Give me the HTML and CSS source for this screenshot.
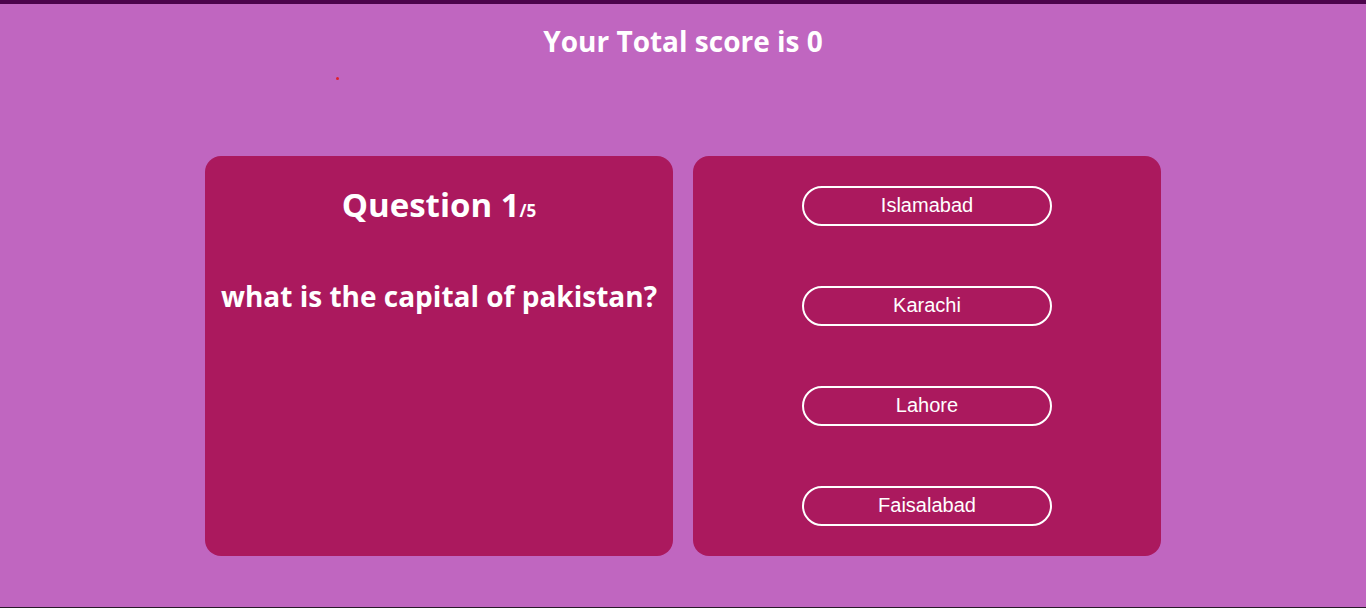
FILE: index.html
```html
<!DOCTYPE html>
<html>
<head>
<meta charset="utf-8">
<link rel="stylesheet" href="styles.css">
</head>
<body>
<div class="app">
  <h1 class="score">Your Total score is 0</h1>
  <div class="dot-row"><span class="dot"></span></div>
  <div class="quiz">
    <div class="card question-card">
      <div class="q-count">Question 1<span class="q-total">/5</span></div>
      <div class="q-text">what is the capital of pakistan?</div>
    </div>
    <div class="card answer-card">
      <button class="answer">Islamabad</button>
      <button class="answer">Karachi</button>
      <button class="answer">Lahore</button>
      <button class="answer">Faisalabad</button>
    </div>
  </div>
</div>
</body>
</html>
```
FILE: styles.css
```css
html, body {
  margin: 0;
  padding: 0;
  height: 100%;
}
body {
  background: #c066c0;
  border-top: 4px solid #4b044b;
  border-bottom: 1px solid #2a1a2a;
  box-sizing: border-box;
  font-family: "Open Sans", "Noto Sans", sans-serif;
  color: #fff;
  overflow: hidden;
}
.app {
  display: flex;
  flex-direction: column;
}
.score {
  margin: 0;
  padding-top: 19px;
  text-align: center;
  font-size: 28px;
  font-weight: 700;
  line-height: 36px;
}
.dot-row {
  height: 2px;
  margin-top: 18px;
  padding-left: 336px;
}
.dot {
  display: block;
  width: 3px;
  height: 3px;
  border-radius: 50%;
  background: #e0202a;
}
.quiz {
  display: flex;
  justify-content: center;
  gap: 20px;
  margin-top: 77px;
}
.card {
  width: 468px;
  height: 400px;
  background: #ab195e;
  border-radius: 16px;
  box-sizing: border-box;
}
.question-card {
  display: flex;
  flex-direction: column;
  align-items: center;
  padding-top: 28px;
}
.q-count {
  font-size: 33px;
  font-weight: 700;
  line-height: 42px;
}
.q-total {
  font-size: 17px;
}
.q-text {
  margin-top: 46px;
  font-size: 28px;
  font-weight: 700;
  line-height: 36px;
  text-align: center;
}
.answer-card {
  display: flex;
  flex-direction: column;
  align-items: center;
  gap: 60px;
  padding-top: 30px;
}
.answer {
  width: 250px;
  height: 40px;
  border: 2px solid #fff;
  border-radius: 20px;
  background: transparent;
  color: #fff;
  font-family: "Liberation Sans", Arial, sans-serif;
  font-size: 20px;
  padding: 0 0 2px;
  line-height: 34px;
}
```
